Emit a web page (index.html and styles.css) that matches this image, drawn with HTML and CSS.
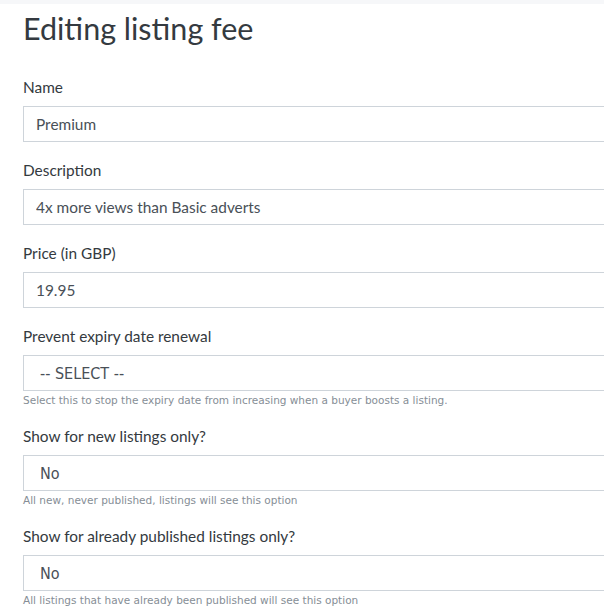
FILE: index.html
```html
<!DOCTYPE html>
<html lang="en">
<head>
<meta charset="utf-8">
<title>Editing listing fee</title>
<link rel="stylesheet" href="styles.css">
</head>
<body>
<div class="topbar"></div>
<main class="page">
  <h1 class="title">Editing listing fee</h1>
  <form class="form">
    <div class="group">
      <label class="label">Name</label>
      <input class="control" type="text" value="Premium">
    </div>
    <div class="group">
      <label class="label">Description</label>
      <input class="control" type="text" value="4x more views than Basic adverts">
    </div>
    <div class="group">
      <label class="label">Price (in GBP)</label>
      <input class="control" type="text" value="19.95">
    </div>
    <div class="group">
      <label class="label">Prevent expiry date renewal</label>
      <select class="control select"><option>-- SELECT --</option></select>
      <small class="help">Select this to stop the expiry date from increasing when a buyer boosts a listing.</small>
    </div>
    <div class="group">
      <label class="label">Show for new listings only?</label>
      <select class="control select"><option>No</option></select>
      <small class="help">All new, never published, listings will see this option</small>
    </div>
    <div class="group">
      <label class="label">Show for already published listings only?</label>
      <select class="control select"><option>No</option></select>
      <small class="help">All listings that have already been published will see this option</small>
    </div>
  </form>
</main>
</body>
</html>
```
FILE: styles.css
```css
html, body {
  margin: 0;
  padding: 0;
  background: #fff;
  overflow: hidden;
}
body {
  font-family: "Lato", "Noto Sans", sans-serif;
  color: #343a40;
}
.topbar {
  height: 4px;
  background: #f6f7f9;
}
.page {
  width: 640px;
  padding: 0 0 0 23px;
}
.title {
  margin: 6px 0 0;
  font-size: 30.5px;
  font-weight: 400;
  line-height: 36px;
  color: #343a40;
  height: 65px;
}
.form {
  display: flex;
  flex-direction: column;
}
.group {
  display: flex;
  flex-direction: column;
  margin-bottom: 16px;
}
.label {
  font-size: 15.4px;
  line-height: 24px;
  margin-bottom: 7px;
  color: #343a40;
}
.control {
  box-sizing: border-box;
  width: 100%;
  height: 36px;
  margin: 0;
  padding: 0 12px;
  border: 1px solid #ced4da;
  border-radius: 0;
  background: #fff;
  font-family: "Lato", "Noto Sans", sans-serif;
  font-size: 15.4px;
  color: #495057;
  outline: none;
}
.select {
  -webkit-appearance: none;
  appearance: none;
  padding: 0 16px;
  font-family: "DejaVu Sans Condensed", "DejaVu Sans", sans-serif;
  font-size: 16px;
}
.help {
  margin-top: 2px;
  font-family: "DejaVu Sans", sans-serif;
  font-size: 10.5px;
  line-height: 15px;
  color: #868e96;
}
```
